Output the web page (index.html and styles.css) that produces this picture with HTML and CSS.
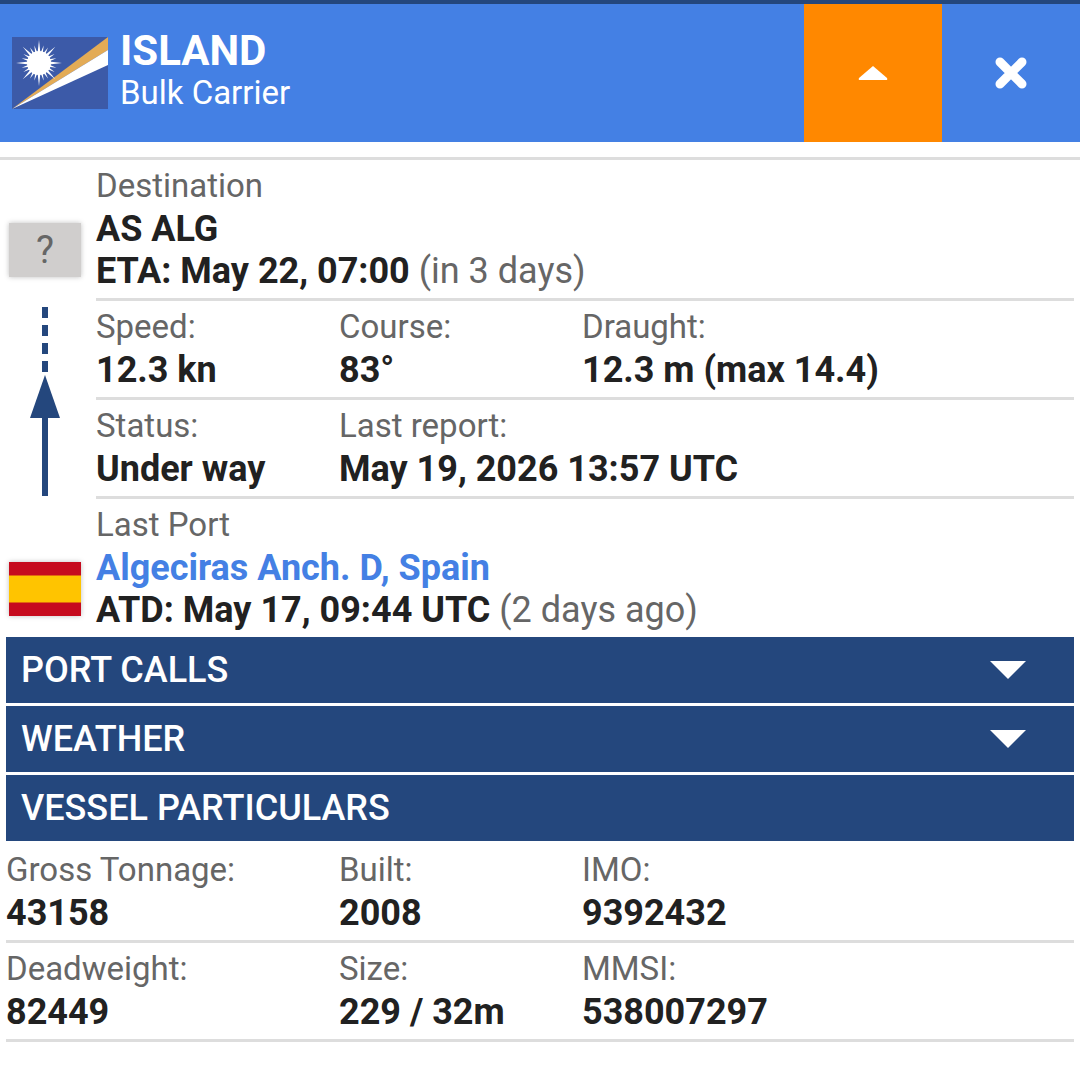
FILE: index.html
```html
<!DOCTYPE html>
<html lang="en">
<head>
  <meta charset="UTF-8">
  <title>ISLAND - Bulk Carrier</title>
  <link rel="stylesheet" href="styles.css">
</head>
<body>
  <header class="head">
    <svg class="head-flag" viewBox="0 0 96 72" width="96" height="72">
      <defs>
        <polygon id="ray-long" points="27,3 28.4,16 25.6,16" fill="#fff"/>
        <polygon id="ray-short" points="27,8 28.4,18 25.6,18" fill="#fff"/>
      </defs>
      <rect width="96" height="72" fill="#3c5aa8"/>
      <polygon points="0,72 96,0 96,13" fill="#e3ab56"/>
      <polygon points="0,72 96,13 96,28" fill="#fff"/>
      <circle cx="27" cy="26" r="12" fill="#fff"/>
      <use href="#ray-long"/>
      <use href="#ray-short" transform="rotate(15 27 26)"/>
      <use href="#ray-short" transform="rotate(30 27 26)"/>
      <use href="#ray-long" transform="rotate(45 27 26)"/>
      <use href="#ray-short" transform="rotate(60 27 26)"/>
      <use href="#ray-short" transform="rotate(75 27 26)"/>
      <use href="#ray-long" transform="rotate(90 27 26)"/>
      <use href="#ray-short" transform="rotate(105 27 26)"/>
      <use href="#ray-short" transform="rotate(120 27 26)"/>
      <use href="#ray-long" transform="rotate(135 27 26)"/>
      <use href="#ray-short" transform="rotate(150 27 26)"/>
      <use href="#ray-short" transform="rotate(165 27 26)"/>
      <use href="#ray-long" transform="rotate(180 27 26)"/>
      <use href="#ray-short" transform="rotate(195 27 26)"/>
      <use href="#ray-short" transform="rotate(210 27 26)"/>
      <use href="#ray-long" transform="rotate(225 27 26)"/>
      <use href="#ray-short" transform="rotate(240 27 26)"/>
      <use href="#ray-short" transform="rotate(255 27 26)"/>
      <use href="#ray-long" transform="rotate(270 27 26)"/>
      <use href="#ray-short" transform="rotate(285 27 26)"/>
      <use href="#ray-short" transform="rotate(300 27 26)"/>
      <use href="#ray-long" transform="rotate(315 27 26)"/>
      <use href="#ray-short" transform="rotate(330 27 26)"/>
      <use href="#ray-short" transform="rotate(345 27 26)"/>
    </svg>
    <div class="head-title">
      <div class="head-name">ISLAND</div>
      <div class="head-type">Bulk Carrier</div>
    </div>
    <div class="head-btn head-btn-up">
      <svg viewBox="0 0 30 16" width="30" height="16"><path d="M15 1 L29 13 Q30 15 28 15 L2 15 Q0 15 1 13 Z" fill="#fff"/></svg>
    </div>
    <div class="head-btn">
      <svg viewBox="0 0 32 32" width="32" height="32"><path d="M5 5 L27 27 M27 5 L5 27" stroke="#fff" stroke-width="9" stroke-linecap="round"/></svg>
    </div>
  </header>

  <div class="voyage">
    <div class="side">
      <div class="unknown-flag">?</div>
      <svg class="track" viewBox="0 0 32 190" width="32" height="190">
        <path d="M15 0 V72" stroke="#24477d" stroke-width="6" stroke-dasharray="11 7"/>
        <path d="M15 96 V189" stroke="#24477d" stroke-width="6"/>
        <polygon points="15,68 30,111 0,111" fill="#24477d"/>
      </svg>
      <svg class="port-flag" viewBox="0 0 72 54" width="72" height="54">
        <rect width="72" height="54" fill="#c60b1e"/>
        <rect y="13.5" width="72" height="27" fill="#ffc400"/>
      </svg>
    </div>
    <div class="info">
      <div class="block block-first">
        <div class="label">Destination</div>
        <div class="value">AS ALG</div>
        <div class="value">ETA: May 22, 07:00 <span class="muted">(in 3 days)</span></div>
      </div>
      <div class="row">
        <div class="cell"><div class="label">Speed:</div><div class="value">12.3 kn</div></div>
        <div class="cell"><div class="label">Course:</div><div class="value">83°</div></div>
        <div class="cell"><div class="label">Draught:</div><div class="value">12.3 m (max 14.4)</div></div>
      </div>
      <div class="row">
        <div class="cell"><div class="label">Status:</div><div class="value">Under way</div></div>
        <div class="cell cell-wide"><div class="label">Last report:</div><div class="value">May 19, 2026 13:57 UTC</div></div>
      </div>
      <div class="block block-last">
        <div class="label">Last Port</div>
        <div class="value link">Algeciras Anch. D, Spain</div>
        <div class="value">ATD: May 17, 09:44 UTC <span class="muted">(2 days ago)</span></div>
      </div>
    </div>
  </div>

  <div class="bar">PORT CALLS <span class="caret"></span></div>
  <div class="bar">WEATHER <span class="caret"></span></div>
  <div class="bar">VESSEL PARTICULARS</div>

  <div class="specs">
    <div class="row spec-row">
      <div class="cell"><div class="label">Gross Tonnage:</div><div class="value">43158</div></div>
      <div class="cell"><div class="label">Built:</div><div class="value">2008</div></div>
      <div class="cell"><div class="label">IMO:</div><div class="value">9392432</div></div>
    </div>
    <div class="row spec-row">
      <div class="cell"><div class="label">Deadweight:</div><div class="value">82449</div></div>
      <div class="cell"><div class="label">Size:</div><div class="value">229 / 32m</div></div>
      <div class="cell"><div class="label">MMSI:</div><div class="value">538007297</div></div>
    </div>
  </div>
</body>
</html>
```

FILE: styles.css
```css
body {
  margin: 0;
  font-family: Roboto, "Liberation Sans", sans-serif;
  background-color: #fff;
  color: #212121;
}

/* Cabecera */
.head {
  display: flex;
  align-items: stretch;
  height: 138px;
  border-top: 4px solid #24477d;
  background-color: #4480e4;
  color: #fff;
  margin-bottom: 15px;
}

.head-flag {
  align-self: center;
  margin: 0 13px 0 12px;
}

.head-title {
  flex: 1;
  padding-top: 23px;
  margin-left: -1px;
}

.head-name {
  font-size: 42px;
  font-weight: 700;
  line-height: 48px;
}

.head-type {
  font-size: 33px;
  line-height: 36px;
}

.head-btn {
  width: 138px;
  display: flex;
  align-items: center;
  justify-content: center;
}

.head-btn-up {
  background-color: #ff8800;
}

/* Datos del viaje */
.voyage {
  display: flex;
  border-top: 3px solid #ddd;
}

.side {
  width: 90px;
  flex: none;
  display: flex;
  flex-direction: column;
  padding-left: 9px;
  box-sizing: border-box;
}

.unknown-flag {
  width: 72px;
  height: 54px;
  margin-top: 63px;
  background-color: #d0cecd;
  box-shadow: 0 0 5px rgba(0, 0, 0, 0.25);
  color: #666;
  font-size: 38px;
  line-height: 54px;
  text-align: center;
}

.track {
  margin: 30px 0 0 21px;
}

.port-flag {
  margin-top: 65px;
  box-shadow: 0 0 5px rgba(0, 0, 0, 0.25);
}

.info {
  flex: 1;
  margin: 0 6px;
}

.label {
  font-size: 33px;
  line-height: 42px;
  color: #666;
  margin-bottom: 1px;
}

.value {
  font-size: 36px;
  line-height: 42px;
  font-weight: 700;
  white-space: nowrap;
}

.muted {
  font-weight: 400;
  color: #666;
}

.link {
  color: #4480e4;
}

.block-first {
  padding: 5px 0 6px;
  border-bottom: 3px solid #ddd;
}

.block-last {
  padding-top: 5px;
  height: 138px;
  box-sizing: border-box;
}

.row {
  display: flex;
  height: 99px;
  box-sizing: border-box;
  padding-top: 5px;
  border-bottom: 3px solid #ddd;
}

.cell {
  width: 243px;
}

.cell-wide {
  width: auto;
}

/* Barras */
.bar {
  display: flex;
  justify-content: space-between;
  align-items: center;
  height: 66px;
  margin: 0 6px 3px;
  padding: 0 48px 0 15px;
  background-color: #24477d;
  color: #fff;
  font-size: 36px;
  font-weight: 500;
}

.caret {
  width: 0;
  height: 0;
  border-left: 18px solid transparent;
  border-right: 18px solid transparent;
  border-top: 18px solid #fff;
}

/* Datos del buque */
.specs {
  margin: 0 6px;
}

.spec-row .cell:first-child {
  width: 333px;
}
```
